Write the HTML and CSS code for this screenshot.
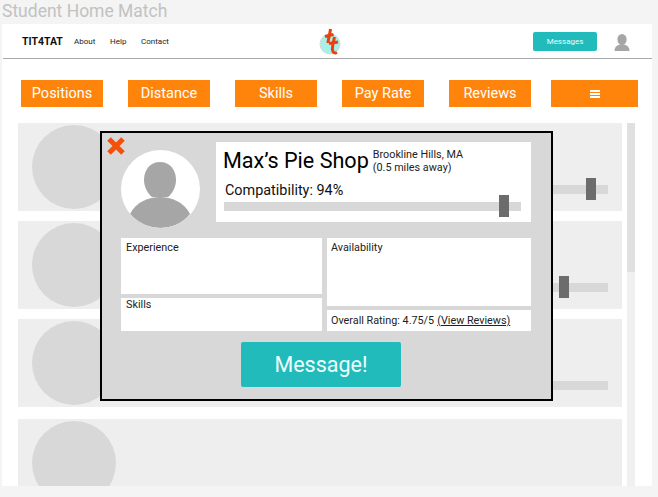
FILE: index.html

```html
<!DOCTYPE html>
<html lang="en">
<head>
    <meta charset="UTF-8">
    <meta name="viewport" content="width=device-width, initial-scale=1.0">
    <link rel="stylesheet" href="styles.css">
    <title>Student Home Match</title>
</head>
<body>
  <div class="page-title">Student Home Match</div>

  <div class="frame">
    <header class="nav">
      <span class="brand">TIT4TAT</span>
      <a class="nav-link">About</a>
      <a class="nav-link">Help</a>
      <a class="nav-link">Contact</a>
      <svg class="logo" width="24" height="30" viewBox="0 0 24 30">
        <circle cx="12" cy="16" r="10" fill="#a8efe8" stroke="#d8d8d8"/>
        <path d="M12.500 1 C12 6 10 12 10 15 M7 8.500 L15.500 6.500" fill="none" stroke="#e8410f" stroke-width="3"/>
        <path d="M16.500 9 C15.500 14 14 19 14.500 22 C15 25 17 25.500 19 24.500 M11 15.500 L20 14" fill="none" stroke="#e8410f" stroke-width="3"/>
      </svg>
      <button class="msg-btn">Messages</button>
      <svg class="nav-user" width="16" height="17" viewBox="0 0 16 17">
        <ellipse cx="8" cy="5.500" rx="4.600" ry="5.500" fill="#a6a6a6"/>
        <path d="M0.500 17 C0.500 12 4 10.500 8 10.500 C12 10.500 15.500 12 15.500 17 Z" fill="#a6a6a6"/>
      </svg>
    </header>

    <div class="filters">
      <button class="filter">Positions</button>
      <button class="filter">Distance</button>
      <button class="filter">Skills</button>
      <button class="filter">Pay Rate</button>
      <button class="filter">Reviews</button>
      <button class="filter filter-menu"><span class="burger"></span></button>
    </div>

    <div class="content">
      <div class="list">
        <div class="row">
          <div class="row-pic"></div>
          <div class="slider"><span class="thumb thumb-a"></span></div>
        </div>
        <div class="row">
          <div class="row-pic"></div>
          <div class="slider"><span class="thumb thumb-b"></span></div>
        </div>
        <div class="row">
          <div class="row-pic"></div>
          <div class="slider"></div>
        </div>
        <div class="row row-last">
          <div class="row-pic"></div>
        </div>
      </div>
      <div class="scrollbar"><div class="scroll-thumb"></div></div>
    </div>

    <div class="modal">
      <svg class="close" width="20" height="20" viewBox="0 0 20 20">
        <path d="M3 3 L17 17 M17 3 L3 17" stroke="#f4500c" stroke-width="5"/>
      </svg>

      <div class="modal-top">
        <div class="avatar">
          <svg width="79" height="78" viewBox="0 0 79 78">
            <path d="M39 12 C49 12 55 20 55 30 C55 37 51 44 47 47 L31 47 C27 44 23 37 23 30 C23 20 29 12 39 12 Z" fill="#a6a6a6"/>
            <path d="M9 64 C15 52 28 47 39 47 C50 47 63 52 69 64 C62 73 51 78 39 78 C28 78 16 73 9 64 Z" fill="#a6a6a6"/>
          </svg>
        </div>
        <div class="card head-card">
          <div class="head-line">
            <span class="shop-name">Max’s Pie Shop</span>
            <span class="shop-place">Brookline Hills, MA<br>(0.5 miles away)</span>
          </div>
          <div class="compat">Compatibility: 94%</div>
          <div class="compat-track"><span class="compat-thumb"></span></div>
        </div>
      </div>

      <div class="details">
        <div class="card experience">Experience</div>
        <div class="card availability">Availability</div>
        <div class="card skills">Skills</div>
        <div class="card rating">Overall Rating: 4.75/5 <u>(View Reviews)</u></div>
      </div>

      <div class="modal-action">
        <button class="message-btn">Message!</button>
      </div>
    </div>
  </div>
</body>
</html>
```

FILE: styles.css

```css
* {
  box-sizing: border-box;
}

html, body {
  height: 100%;
}

body {
  margin: 0;
  background-color: #f4f4f4;
  font-family: Roboto, "Liberation Sans", sans-serif;
  overflow: hidden;
}

button {
  font-family: inherit;
  border: none;
  padding: 0;
}

.page-title {
  height: 24px;
  padding: 1px 0 0 2px;
  font-size: 17.500px;
  line-height: 20px;
  color: #c2c2c2;
}

.frame {
  position: relative;
  width: 650px;
  height: 462px;
  margin-left: 2px;
  background-color: #fff;
  overflow: hidden;
}

/* Top nav */
.nav {
  position: relative;
  display: flex;
  align-items: center;
  height: 35px;
  margin-left: 1px;
  padding: 0 22px 0 19px;
  border-bottom: 1px solid #a8a8a8;
}

.brand {
  font-size: 10.500px;
  font-weight: 700;
  color: #111;
  width: 52px;
}

.nav-link {
  font-size: 8px;
  color: #222;
}

.nav-link:nth-of-type(1) {
  width: 36px;
}

.nav-link:nth-of-type(2) {
  width: 31px;
}

.logo {
  position: absolute;
  left: 315px;
  top: 4px;
}

.msg-btn {
  margin-left: auto;
  width: 64px;
  height: 19px;
  border-radius: 2px;
  background-color: #22bbbb;
  color: #e8fbfb;
  font-size: 8px;
}

.nav-user {
  margin-left: 17px;
  margin-top: 3px;
}

/* Filters */
.filters {
  display: flex;
  gap: 25px;
  margin-top: 21px;
  padding-left: 19px;
}

.filter {
  width: 82px;
  height: 27px;
  background-color: #fe840c;
  color: #fff;
  font-size: 14.500px;
}

.filter-menu {
  width: 87px;
  margin-left: -5px;
}

.burger {
  display: block;
  width: 10px;
  height: 8px;
  margin: 0 auto;
  border-top: 2px solid #fff;
  border-bottom: 2px solid #fff;
  background: linear-gradient(#fff, #fff) center / 100% 2px no-repeat;
}

/* Background list */
.content {
  display: flex;
  gap: 5px;
  margin-top: 16px;
  padding-left: 16px;
}

.list {
  display: flex;
  flex-direction: column;
  gap: 10px;
  width: 604px;
}

.row {
  position: relative;
  height: 88px;
  flex-shrink: 0;
  padding: 2px 0 0 14px;
  background-color: #eeeeee;
}

.row:nth-child(3) {
  margin-bottom: 2px;
}

.row-last {
  height: 67px;
  overflow: hidden;
}

.row-pic {
  width: 84px;
  height: 84px;
  border-radius: 50%;
  background-color: #d8d8d8;
}

.slider {
  position: absolute;
  left: 300px;
  right: 14px;
  top: 62px;
  height: 9px;
  background-color: #d8d8d8;
}

.thumb {
  position: absolute;
  top: -7px;
  width: 10px;
  height: 22px;
  background-color: #6c6c6c;
}

.thumb-a {
  left: 268px;
}

.thumb-b {
  left: 241px;
}

.scrollbar {
  width: 8px;
  height: 363px;
  background-color: #f0f0f0;
}

.scroll-thumb {
  height: 149px;
  background-color: #e0e0e0;
}

/* Modal over the list */
.modal {
  position: absolute;
  left: 98px;
  top: 107px;
  width: 453px;
  height: 270px;
  padding: 9px 20px 0 19px;
  background-color: #d8d8d8;
  border: 2px solid #000;
}

.close {
  position: absolute;
  left: 4px;
  top: 3px;
}

.card {
  background-color: #fff;
  color: #222;
  font-size: 10.800px;
}

.modal-top {
  display: flex;
  height: 80px;
}

.avatar {
  width: 79px;
  height: 78px;
  margin-top: 8px;
  border-radius: 50%;
  background-color: #fff;
  overflow: hidden;
  flex-shrink: 0;
}

.avatar svg {
  display: block;
}

.head-card {
  width: 315px;
  height: 80px;
  margin-left: 16px;
  padding: 6px 10px 0 7px;
}

.head-line {
  display: flex;
  align-items: flex-start;
  gap: 4px;
}

.shop-name {
  font-size: 21.600px;
  line-height: 26px;
  color: #000;
  white-space: nowrap;
}

.shop-place {
  font-size: 10.800px;
  line-height: 12.500px;
  margin-top: 1px;
}

.compat {
  margin: 9px 0 0 2px;
  font-size: 14.400px;
  line-height: 16px;
  color: #111;
}

.compat-track {
  position: relative;
  width: 297px;
  height: 9px;
  margin: 3px 0 0 1px;
  background-color: #d8d8d8;
}

.compat-thumb {
  position: absolute;
  left: 275px;
  top: -7px;
  width: 10px;
  height: 22px;
  background-color: #6c6c6c;
}

.details {
  display: grid;
  grid-template-columns: 201px 204px;
  grid-template-rows: 56px 8px 21px;
  column-gap: 5px;
  row-gap: 4px;
  margin-top: 16px;
}

.experience {
  grid-column: 1;
  grid-row: 1;
  padding: 3px 5px;
}

.availability {
  grid-column: 2;
  grid-row: 1 / span 2;
  padding: 3px 4px;
}

.skills {
  grid-column: 1;
  grid-row: 2 / span 2;
  padding: 0 5px;
}

.rating {
  grid-column: 2;
  grid-row: 3;
  display: flex;
  align-items: center;
  gap: 3px;
  padding: 0 4px;
  white-space: nowrap;
}

.modal-action {
  display: flex;
  margin-top: 11px;
  padding-left: 120px;
}

.message-btn {
  width: 160px;
  height: 45px;
  border-radius: 2px;
  background-color: #22bbbb;
  color: #eefcfc;
  font-size: 21.500px;
}
```
